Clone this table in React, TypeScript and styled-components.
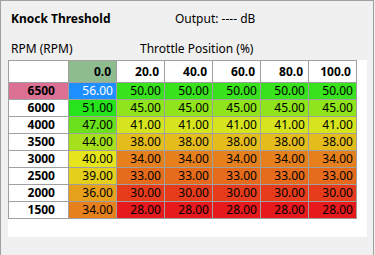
import React from 'react';
import styled, {createGlobalStyle} from 'styled-components';

const GlobalStyle = createGlobalStyle`
	html, body {
		margin: 0;
		padding: 0;
		background: #f0f0f0;
	}
	body {
		font-family: 'Noto Sans', 'Open Sans', sans-serif;
		font-size: 12px;
		color: #000;
	}
`;

const throttle = ['0.0', '20.0', '40.0', '60.0', '80.0', '100.0'];

// Each row: rpm value, then the threshold per throttle column
const rows: {rpm: string; values: number[]}[] = [
	{rpm: '6500', values: [56, 50, 50, 50, 50, 50]},
	{rpm: '6000', values: [51, 45, 45, 45, 45, 45]},
	{rpm: '4000', values: [47, 41, 41, 41, 41, 41]},
	{rpm: '3500', values: [44, 38, 38, 38, 38, 38]},
	{rpm: '3000', values: [40, 34, 34, 34, 34, 34]},
	{rpm: '2500', values: [39, 33, 33, 33, 33, 33]},
	{rpm: '2000', values: [36, 30, 30, 30, 30, 30]},
	{rpm: '1500', values: [34, 28, 28, 28, 28, 28]},
];

const heat: Record<number, string> = {
	56: '#1e8fff',
	51: '#27e31c',
	50: '#38e21c',
	47: '#6be01c',
	45: '#8fe41c',
	44: '#a6e01c',
	41: '#d5e41c',
	40: '#e6e41c',
	39: '#e4d01c',
	38: '#e4bc1c',
	36: '#e6a01c',
	34: '#e6801c',
	33: '#e66c1c',
	30: '#e63c1c',
	28: '#e61a1c',
};

const App: React.FC = () => {
	return (
		<>
			<GlobalStyle />
			<Window>
				<TitleBar>
					<Title>Knock Threshold</Title>
					<Output>Output: ---- dB</Output>
				</TitleBar>
				<AxisBar>
					<AxisLabel>RPM (RPM)</AxisLabel>
					<AxisLabel>Throttle Position (%)</AxisLabel>
				</AxisBar>
				<Panel>
					<Grid>
						<Corner />
						{throttle.map((t, i) => (
							<HeaderCell key={t} $active={i === 0}>
								{t}
							</HeaderCell>
						))}
						{rows.map((row, r) => (
							<React.Fragment key={row.rpm}>
								<RpmCell $active={r === 0}>{row.rpm}</RpmCell>
								{row.values.map((v, c) => (
									<ValueCell key={c} $bg={heat[v]} $selected={r === 0 && c === 0}>
										{v.toFixed(2)}
									</ValueCell>
								))}
							</React.Fragment>
						))}
					</Grid>
				</Panel>
			</Window>
		</>
	);
};

export default App;

const Window = styled.div`
	width: 372px;
	height: 260px;
	border: 1px solid #a0a0a0;
	border-bottom: none;
	box-sizing: content-box;
`;

const TitleBar = styled.div`
	display: flex;
	align-items: center;
	height: 35px;
	padding-left: 10px;
`;

const Title = styled.div`
	width: 164px;
	font-weight: 700;
`;

const Output = styled.div``;

const AxisBar = styled.div`
	display: grid;
	grid-template-columns: 129px auto;
	align-items: center;
	height: 24px;
	padding-left: 10px;
`;

const AxisLabel = styled.div``;

const Panel = styled.div`
	margin-left: 7px;
	width: 359px;
	height: 177px;
	background: #fff;
`;

const Grid = styled.div`
	display: inline-grid;
	grid-template-columns: 59px repeat(6, 47px);
	grid-template-rows: 21px repeat(8, 16px);
	gap: 1px;
	padding: 1px;
	background: #a0a0a0;
`;

const Cell = styled.div`
	display: flex;
	align-items: center;
	justify-content: flex-end;
	line-height: 16px;
	white-space: nowrap;
`;

const Corner = styled(Cell)`
	background: #fff;
`;

const HeaderCell = styled(Cell)<{$active: boolean}>`
	padding-right: 5px;
	font-weight: 700;
	background: ${(p) => (p.$active ? '#8fbc8f' : '#fff')};
`;

const RpmCell = styled(Cell)<{$active: boolean}>`
	padding-right: 13px;
	font-weight: 700;
	background: ${(p) => (p.$active ? '#db7093' : '#fff')};
`;

const ValueCell = styled(Cell)<{$bg: string; $selected: boolean}>`
	padding-right: 3px;
	background: ${(p) => p.$bg};
	color: ${(p) => (p.$selected ? '#fff' : '#000')};
`;
